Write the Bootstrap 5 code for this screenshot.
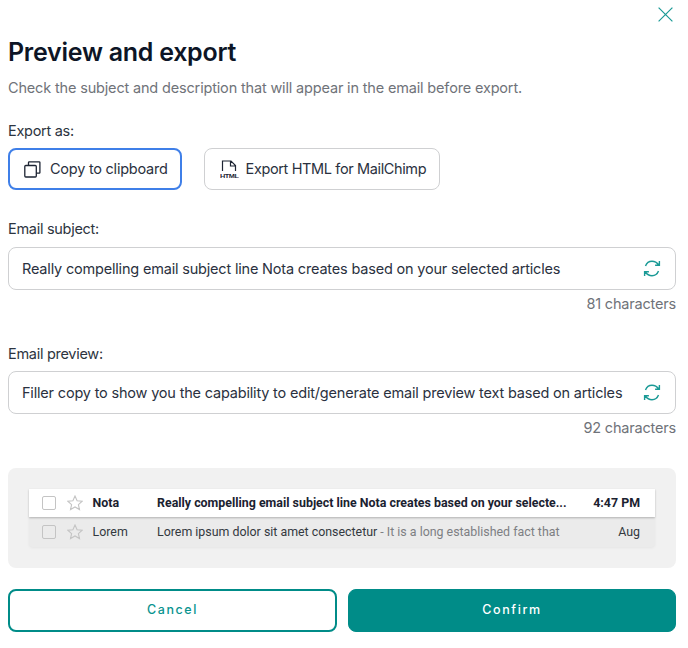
<!doctype html>
<html lang="en"><head><meta charset="utf-8"><title>Preview and export</title>
<link href="https://cdn.jsdelivr.net/npm/bootstrap@5.3.0/dist/css/bootstrap.min.css" rel="stylesheet">
<style>
html,body{height:100%;}
body{font-family:Inter,"Liberation Sans",sans-serif;background:#fff;color:#1d2433;overflow:hidden;}
.shell{padding:7px 12px 0 8px;width:688px;}
.close-row{height:14px;margin-right:3px;}
.title-text{font-size:25px;font-weight:600;line-height:32px;color:#0d1526;margin:15px 0 0;letter-spacing:-.26px;}
.sub-text{font-size:14.5px;line-height:20px;color:#6f7379;margin:10px 0 0;letter-spacing:-.165px;}
.lbl{font-size:14.5px;line-height:20px;color:#2c3440;margin:0;letter-spacing:-.02em;}
.opt{height:42px;border:1px solid #cfd0d2;border-radius:8px;background:#fff;font-size:14.5px;color:#2a3140;padding:0 13px 0 15px;gap:7px;letter-spacing:-.24px;}
.opt-sel{border:2px solid #3f7fe8;padding:0 12px 0 14px;gap:9px;}
.opt-tight{letter-spacing:-.37px;}
.opt-gap{gap:22px;}
.inp-box{height:43px;border:1px solid #cfd0d2;border-radius:8px;padding:0 14px 0 13px;font-size:14.5px;color:#2a3140;letter-spacing:-.185px;white-space:nowrap;}
.count-text{font-size:14.5px;line-height:20px;color:#6f7379;text-align:right;margin-top:4px;letter-spacing:-.185px;}
.mail-wrap{background:#f1f1f1;border-radius:8px;padding:21px 21px 20px;height:100px;}
.mail-row{height:28px;padding:0 15px 0 13px;font-family:Roboto,"Liberation Sans",sans-serif;font-size:12.4px;color:#1b2230;}
.mail-top{background:#fff;font-weight:700;box-shadow:0 1px 2px rgba(0,0,0,.25);position:relative;}
.mail-bot{background:#ebebeb;height:30px;box-shadow:0 1px 3px rgba(0,0,0,.05);color:#33393f;border-radius:0 0 4px 4px;}
.txt-low{padding-top:1px;}
.cb{width:14px;height:14px;border:1.5px solid #c4c4c4;border-radius:2px;flex:none;margin-right:11px;}
.star-ico{margin-right:9.5px;flex:none;}
.from-col{width:64.5px;flex:none;}
.subj-col{flex:1;min-width:0;white-space:nowrap;overflow:hidden;}
.muted-part{color:#7d7f83;}
.act-btn{height:43px;border-radius:8px;font-size:12.5px;font-weight:500;letter-spacing:.13em;padding:0;}
.btn-cancel-x{border:2px solid #008c88;color:#0a9490;background:#fff;flex:0 0 329px;}
.btn-confirm-x{background:#008c88;color:#fff;border:1px solid #008c88;flex:1 1 0;}
.act-gap{gap:11px;}
</style></head>
<body>
<div class="shell">
 <div class="close-row d-flex justify-content-end">
  <svg width="15" height="15" viewBox="0 0 15 15" fill="none" stroke="#1a9a96" stroke-width="1.2"><path d="M.6.6l13.8 13.8M14.4.6L.6 14.4"/></svg>
 </div>
 <h1 class="title-text">Preview and export</h1>
 <p class="sub-text">Check the subject and description that will appear in the email before export.</p>

 <p class="lbl" style="margin-top:23px">Export as:</p>
 <div class="d-flex opt-gap" style="margin-top:7px">
  <button type="button" class="btn opt opt-sel d-flex align-items-center">
   <svg width="17" height="17" viewBox="0 0 17 17" fill="none" stroke="#1d2433" stroke-width="1.3"><rect x=".8" y="4.5" width="11.5" height="11.5" rx="1"/><path d="M4.5 4.5V1.5a.7.7 0 0 1 .7-.7h10a.7.7 0 0 1 .7.7v10a.7.7 0 0 1-.7.7h-2.9"/></svg>
   <span>Copy to clipboard</span>
  </button>
  <button type="button" class="btn opt opt-tight d-flex align-items-center">
   <svg width="19" height="19" viewBox="0 0 19 19" fill="none"><path d="M2.5 11V1h8.5l4.5 4.5V11M10.5 1v5h5" stroke="#1d2433" stroke-width="1.2"/><text x="0" y="18" font-family="Liberation Sans,sans-serif" font-size="6" font-weight="700" fill="#1d2433" textLength="18.5" lengthAdjust="spacingAndGlyphs">HTML</text></svg>
   <span>Export HTML for MailChimp</span>
  </button>
 </div>

 <p class="lbl" style="margin-top:29px">Email subject:</p>
 <div class="inp-box d-flex align-items-center justify-content-between" style="margin-top:8px">
  <span>Really compelling email subject line Nota creates based on your selected articles</span>
  <svg width="18" height="17" viewBox="0 0 18 17" fill="none" stroke="#1a9a96" stroke-width="1.4"><path d="M2.5 6C3.6 3 6 1.3 9 1.3c2.9 0 5 1.3 6.8 3.7M16.4 1v4.3h-4.3"/><path d="M15.5 11C14.4 14 12 15.7 9 15.7c-2.9 0-5-1.3-6.800-3.700M1.6 16v-4.300h4.300"/></svg>
 </div>
 <div class="count-text">81 characters</div>

 <p class="lbl" style="margin-top:30px">Email preview:</p>
 <div class="inp-box d-flex align-items-center justify-content-between" style="margin-top:7px">
  <span>Filler copy to show you the capability to edit/generate email preview text based on articles</span>
  <svg width="18" height="17" viewBox="0 0 18 17" fill="none" stroke="#1a9a96" stroke-width="1.4"><path d="M2.5 6C3.6 3 6 1.3 9 1.3c2.9 0 5 1.3 6.8 3.7M16.4 1v4.3h-4.3"/><path d="M15.5 11C14.4 14 12 15.7 9 15.7c-2.9 0-5-1.3-6.800-3.700M1.6 16v-4.300h4.300"/></svg>
 </div>
 <div class="count-text">92 characters</div>

 <div class="mail-wrap" style="margin-top:30px">
  <div class="mail-row mail-top d-flex align-items-center">
   <span class="cb"></span>
   <svg class="star-ico" width="16" height="16" viewBox="0 0 16 16" fill="none" stroke="#c4c4c4" stroke-width="1.1"><path d="M8 1l2.1 4.700 5.100.5-3.800 3.400 1.100 5L8 12l-4.500 2.600 1.100-5L.8 6.200l5.100-.5z"/></svg>
   <span class="from-col txt-low">Nota</span>
   <span class="subj-col txt-low">Really compelling email subject line Nota creates based on your selecte...</span>
   <span class="ms-3 txt-low">4:47 PM</span>
  </div>
  <div class="mail-row mail-bot d-flex align-items-center">
   <span class="cb"></span>
   <svg class="star-ico" width="16" height="16" viewBox="0 0 16 16" fill="none" stroke="#c4c4c4" stroke-width="1.1"><path d="M8 1l2.1 4.700 5.100.5-3.800 3.400 1.100 5L8 12l-4.500 2.600 1.100-5L.8 6.200l5.100-.5z"/></svg>
   <span class="from-col txt-low">Lorem</span>
   <span class="subj-col txt-low">Lorem ipsum dolor sit amet consectetur <span class="muted-part">- It is a long established fact that</span></span>
   <span class="ms-3 txt-low">Aug</span>
  </div>
 </div>

 <div class="d-flex act-gap" style="margin-top:21px">
  <button type="button" class="btn act-btn btn-cancel-x">Cancel</button>
  <button type="button" class="btn act-btn btn-confirm-x">Confirm</button>
 </div>
</div>
<script src="https://cdn.jsdelivr.net/npm/bootstrap@5.3.0/dist/js/bootstrap.bundle.min.js"></script>
</body></html>
